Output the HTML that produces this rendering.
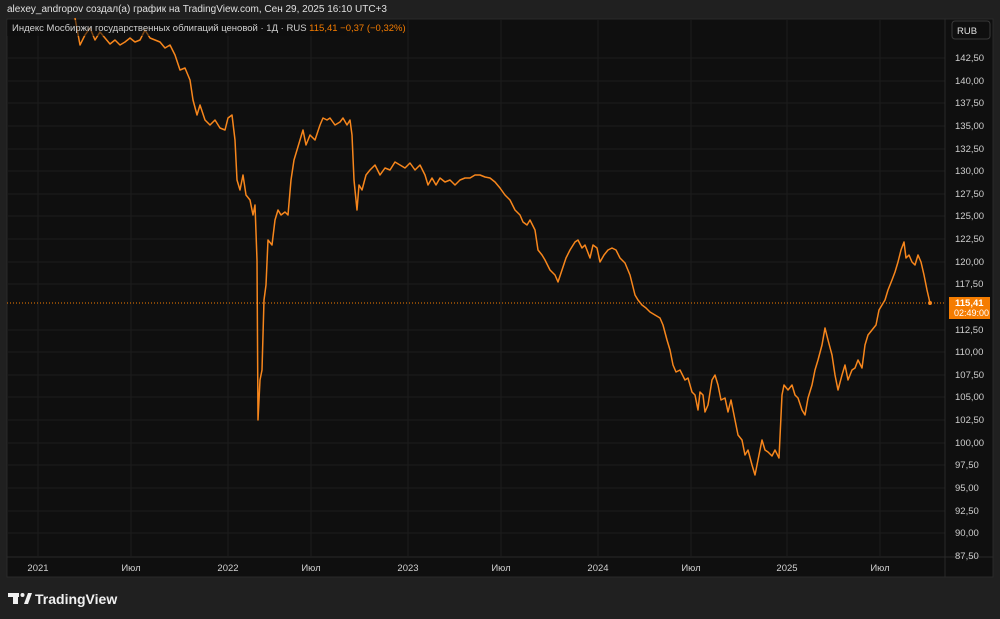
<!DOCTYPE html>
<html><head><meta charset="utf-8"><style>
body{margin:0;width:1000px;height:619px;background:#202020;font-family:"Liberation Sans",sans-serif;overflow:hidden;position:relative}
.t{position:absolute;color:#d6d6d6;font-size:10px;white-space:nowrap}
</style></head><body>
<div class="t" style="left:7px;top:4px;font-size:10px;color:#e0e0e0">alexey_andropov создал(а) график на TradingView.com, Сен 29, 2025 16:10 UTC+3</div>
<svg width="1000" height="619" style="position:absolute;left:0;top:0" font-family="Liberation Sans, sans-serif">
<rect x="7" y="19" width="986" height="558" fill="#0f0f0f" stroke="#2a2a2a"/>
<g stroke="#1c1c1c" stroke-width="1">
<line x1="38" y1="19" x2="38" y2="556"/><line x1="131" y1="19" x2="131" y2="556"/><line x1="228" y1="19" x2="228" y2="556"/><line x1="311" y1="19" x2="311" y2="556"/><line x1="408" y1="19" x2="408" y2="556"/><line x1="501" y1="19" x2="501" y2="556"/><line x1="598" y1="19" x2="598" y2="556"/><line x1="691" y1="19" x2="691" y2="556"/><line x1="787" y1="19" x2="787" y2="556"/><line x1="880" y1="19" x2="880" y2="556"/>
<line x1="7" y1="58" x2="945" y2="58"/><line x1="7" y1="81" x2="945" y2="81"/><line x1="7" y1="103" x2="945" y2="103"/><line x1="7" y1="126" x2="945" y2="126"/><line x1="7" y1="149" x2="945" y2="149"/><line x1="7" y1="171" x2="945" y2="171"/><line x1="7" y1="194" x2="945" y2="194"/><line x1="7" y1="216" x2="945" y2="216"/><line x1="7" y1="239" x2="945" y2="239"/><line x1="7" y1="262" x2="945" y2="262"/><line x1="7" y1="284" x2="945" y2="284"/><line x1="7" y1="330" x2="945" y2="330"/><line x1="7" y1="352" x2="945" y2="352"/><line x1="7" y1="375" x2="945" y2="375"/><line x1="7" y1="397" x2="945" y2="397"/><line x1="7" y1="420" x2="945" y2="420"/><line x1="7" y1="443" x2="945" y2="443"/><line x1="7" y1="465" x2="945" y2="465"/><line x1="7" y1="488" x2="945" y2="488"/><line x1="7" y1="511" x2="945" y2="511"/><line x1="7" y1="533" x2="945" y2="533"/>
</g>
<line x1="945" y1="19" x2="945" y2="577" stroke="#2a2a2a"/>
<line x1="7" y1="557" x2="993" y2="557" stroke="#2a2a2a"/>
<line x1="7" y1="303" x2="945" y2="303" stroke="#f57c00" stroke-dasharray="1,2"/>
<polyline fill="none" stroke="#f7861c" stroke-width="1.5" stroke-linejoin="round" points="75,18 80,45 85,35 90,28 95,40 100,32 105,38 110,44 115,40 120,45 125,42 130,38 135,42 140,40 145,30 150,38 155,40 160,42 165,48 170,45 175,55 180,70 185,68 190,80 193,100 197,115 200,105 205,120 210,125 215,120 220,128 225,130 228,118 232,115 235,140 237,180 240,190 243,175 246,195 250,200 253,215 255,205 257,260 258,420 260,380 262,370 264,300 266,285 268,240 272,245 275,220 278,210 281,215 285,212 288,215 291,180 294,160 297,150 300,140 303,130 306,145 310,135 315,140 320,125 323,118 327,120 330,118 335,125 340,122 343,118 347,125 350,120 352,135 354,180 357,210 359,185 362,190 366,175 370,170 375,165 380,175 385,168 390,170 395,162 400,165 405,168 410,163 415,170 420,165 425,175 428,185 432,178 436,185 440,178 445,182 450,180 455,185 460,180 465,178 470,178 475,175 480,175 485,177 490,178 495,182 500,188 505,195 510,200 515,210 520,215 523,222 527,225 530,220 535,230 538,250 542,255 545,260 550,270 555,275 558,282 562,270 566,258 570,250 575,242 578,240 582,248 585,245 590,258 593,245 597,248 600,262 604,255 608,250 612,248 616,250 620,258 625,263 630,275 635,295 638,300 642,305 646,308 650,312 655,315 660,318 663,325 667,340 670,350 673,365 676,372 680,370 685,380 688,378 692,392 695,395 698,410 700,392 703,395 705,412 708,405 712,380 715,375 718,385 721,400 725,398 728,412 731,400 735,420 738,435 742,440 745,455 748,450 752,465 755,475 758,460 762,440 765,450 768,452 772,456 775,450 779,458 782,395 784,385 788,390 792,385 795,395 798,398 802,410 805,415 808,398 812,385 815,370 818,360 822,345 825,328 828,340 832,355 835,375 838,390 842,375 845,365 848,380 852,370 855,368 858,360 862,368 865,345 868,335 872,330 876,325 879,310 882,305 885,300 888,290 892,280 895,272 898,262 901,250 904,242 906,258 909,255 912,262 915,265 918,255 921,262 924,275 927,290 930,303"/>
<circle cx="930" cy="303" r="2" fill="#f7861c"/>
<rect x="7" y="20" width="340" height="16" fill="#0f0f0f" opacity="0.55"/>
<text x="12" y="31" font-size="9.5" fill="#d0d0d0">Индекс Мосбиржи государственных облигаций ценовой · 1Д · RUS <tspan fill="#f57c00">115,41  −0,37 (−0,32%)</tspan></text>
<rect x="952" y="21" width="38" height="18" rx="3" fill="#0f0f0f" stroke="#3a3a3a"/>
<text x="957" y="34" font-size="9.5" fill="#e0e0e0">RUB</text>
<g font-size="9.5" fill="#d0d0d0">
<text x="955" y="61">142,50</text><text x="955" y="84">140,00</text><text x="955" y="106">137,50</text><text x="955" y="129">135,00</text><text x="955" y="152">132,50</text><text x="955" y="174">130,00</text><text x="955" y="197">127,50</text><text x="955" y="219">125,00</text><text x="955" y="242">122,50</text><text x="955" y="265">120,00</text><text x="955" y="287">117,50</text><text x="955" y="333">112,50</text><text x="955" y="355">110,00</text><text x="955" y="378">107,50</text><text x="955" y="400">105,00</text><text x="955" y="423">102,50</text><text x="955" y="446">100,00</text><text x="955" y="468">97,50</text><text x="955" y="491">95,00</text><text x="955" y="514">92,50</text><text x="955" y="536">90,00</text><text x="955" y="559">87,50</text>
</g>
<rect x="949" y="297" width="41" height="22" fill="#f57c00"/>
<text x="955" y="306" font-size="9.5" fill="#fff" font-weight="bold">115,41</text>
<text x="954" y="316" font-size="9" fill="#fff">02:49:00</text>
<g font-size="9.5" fill="#d0d0d0" text-anchor="middle">
<text x="38" y="571">2021</text><text x="131" y="571">Июл</text><text x="228" y="571">2022</text><text x="311" y="571">Июл</text><text x="408" y="571">2023</text><text x="501" y="571">Июл</text><text x="598" y="571">2024</text><text x="691" y="571">Июл</text><text x="787" y="571">2025</text><text x="880" y="571">Июл</text>
</g>
<g fill="#f0f0f0">
<rect x="8" y="593" width="11" height="4"/><rect x="13" y="593" width="5" height="11"/>
<circle cx="22.5" cy="595" r="2"/>
<polygon points="24,604 28,593 32,593 28,604"/>
</g>
<text x="35" y="604" font-size="14" fill="#f0f0f0" font-weight="bold">TradingView</text>
</svg>
</body></html>
